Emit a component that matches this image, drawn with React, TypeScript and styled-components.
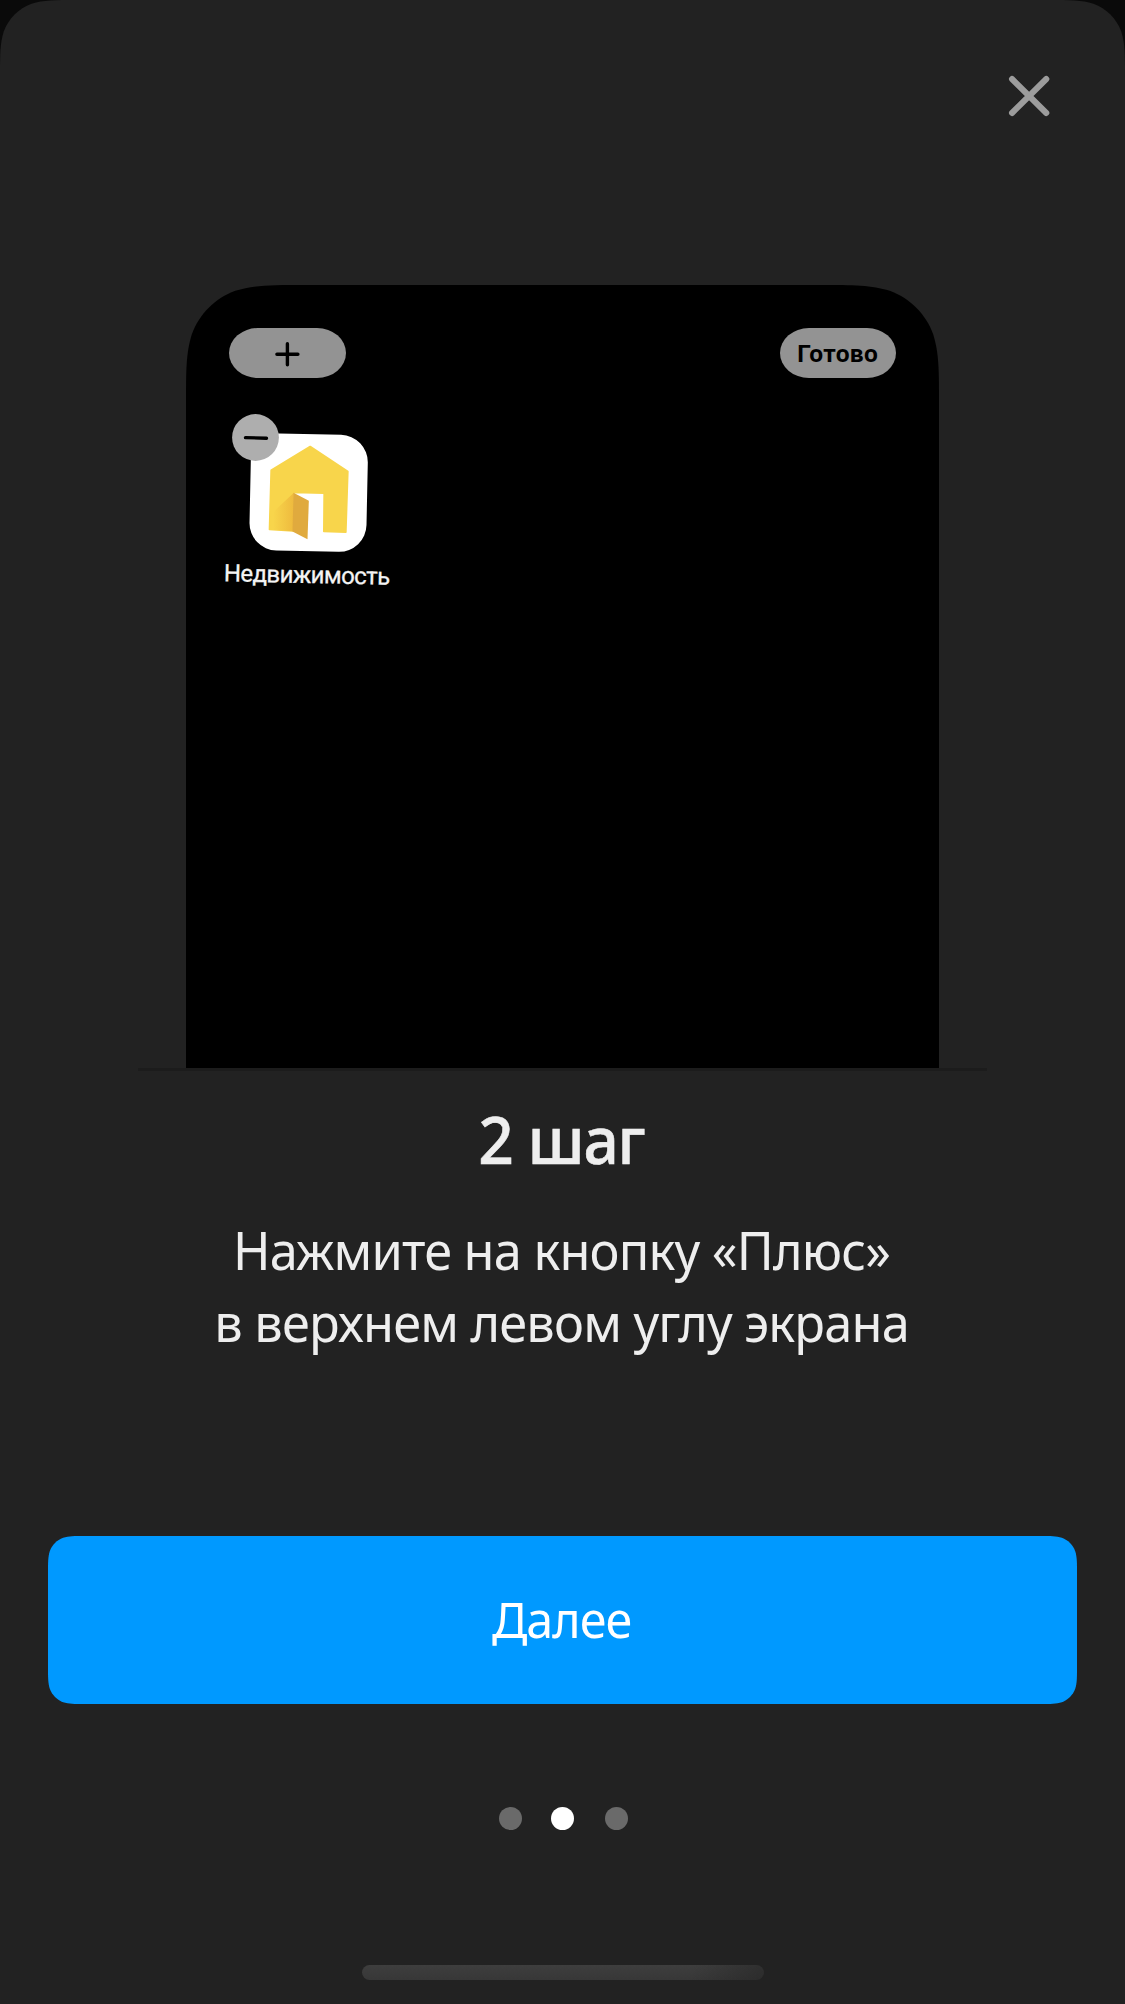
import React from "react";
import styled, { createGlobalStyle } from "styled-components";

const GlobalStyle = createGlobalStyle`
  * { box-sizing: border-box; }
  body { margin: 0; background: #0a0a0a; }
`;

type Radii = { top: number; bottom: number };

/* Outline of a panel with continuous ("squircle") corners. */
const smoothRect = (w: number, h: number, { top: t, bottom: b }: Radii) =>
  [
    `M0 ${1.5287 * t}`,
    `C0 ${1.0885 * t} 0 ${0.8684 * t} ${0.0749 * t} ${0.6315 * t}`,
    `C${0.1691 * t} ${0.3728 * t} ${0.3728 * t} ${0.1691 * t} ${0.6315 * t} ${0.0749 * t}`,
    `C${0.8684 * t} 0 ${1.0885 * t} 0 ${1.5287 * t} 0`,
    `L${w - 1.5287 * t} 0`,
    `C${w - 1.0885 * t} 0 ${w - 0.8684 * t} 0 ${w - 0.6315 * t} ${0.0749 * t}`,
    `C${w - 0.3728 * t} ${0.1691 * t} ${w - 0.1691 * t} ${0.3728 * t} ${w - 0.0749 * t} ${0.6315 * t}`,
    `C${w} ${0.8684 * t} ${w} ${1.0885 * t} ${w} ${1.5287 * t}`,
    `L${w} ${h - 1.5287 * b}`,
    `C${w} ${h - 1.0885 * b} ${w} ${h - 0.8684 * b} ${w - 0.0749 * b} ${h - 0.6315 * b}`,
    `C${w - 0.1691 * b} ${h - 0.3728 * b} ${w - 0.3728 * b} ${h - 0.1691 * b} ${w - 0.6315 * b} ${h - 0.0749 * b}`,
    `C${w - 0.8684 * b} ${h} ${w - 1.0885 * b} ${h} ${w - 1.5287 * b} ${h}`,
    `L${1.5287 * b} ${h}`,
    `C${1.0885 * b} ${h} ${0.8684 * b} ${h} ${0.6315 * b} ${h - 0.0749 * b}`,
    `C${0.3728 * b} ${h - 0.1691 * b} ${0.1691 * b} ${h - 0.3728 * b} ${0.0749 * b} ${h - 0.6315 * b}`,
    `C0 ${h - 0.8684 * b} 0 ${h - 1.0885 * b} 0 ${h - 1.5287 * b}Z`,
  ].join("");

const Sheet = styled.main`
  display: flex;
  flex-direction: column;
  align-items: center;
  width: 1125px;
  height: 2004px;
  overflow: hidden;
  background: #222;
  clip-path: path("${smoothRect(1125, 2004, { top: 50, bottom: 0 })}");
  font-family: "Noto Sans", "Open Sans", sans-serif;
  color: #eee;
`;

const Header = styled.header`
  display: flex;
  justify-content: flex-end;
  align-self: stretch;
  flex: none;
  height: 285px;
  padding: 72px 72px 0 0;
`;

const CloseButton = styled.button`
  width: 48px;
  height: 48px;
  padding: 0;
  border: 0;
  background: none;
  svg { display: block; }
`;

const Illustration = styled.section`
  display: flex;
  justify-content: center;
  flex: none;
  width: 849px;
  height: 786px;
  border-bottom: 3px solid #1c1c1c;
`;

const Phone = styled.div`
  width: 753px;
  height: 783px;
  padding: 43px 43px 0;
  background: #000;
  clip-path: path("${smoothRect(753, 783, { top: 78, bottom: 0 })}");
`;

const PhoneBar = styled.div`
  display: flex;
  justify-content: space-between;
`;

const Pill = styled.div`
  display: flex;
  align-items: center;
  justify-content: center;
  width: 116.5px;
  height: 50px;
  padding-top: 1px;
  border-radius: 29px / 25px;
  background: #939393;
  color: #000;
  font: 700 24.5px/50px Roboto, sans-serif;
  letter-spacing: 0.35px;
`;

const AppTile = styled.div`
  position: relative;
  display: flex;
  flex-direction: column;
  align-items: center;
  width: 160px;
  margin: 55px 0 0 -1px;
`;

const AppIcon = styled.svg`
  display: block;
  width: 119px;
  height: 119px;
`;

const RemoveBadge = styled.svg`
  position: absolute;
  left: 4px;
  top: -19px;
  width: 47px;
  height: 47px;
`;

const AppName = styled.span`
  margin-top: 5px;
  margin-right: 3px;
  font: 400 24px/36px Roboto, sans-serif;
  letter-spacing: -0.6px;
  -webkit-text-stroke: 0.3px #f4f4f4;
  white-space: nowrap;
  color: #f4f4f4;
  transform: rotate(1.2deg);
`;

const Title = styled.h1`
  margin: 23px 3px 0 0;
  font-size: 65.5px;
  font-weight: 500;
  line-height: 90px;
  letter-spacing: -1.2px;
  white-space: nowrap;
  -webkit-text-stroke: 0.6px #eee;
  transform: scaleX(0.95);
`;

const Description = styled.p`
  margin: 30px 2px 0 0;
  font-size: 52px;
  line-height: 72px;
  letter-spacing: -0.83px;
  text-align: center;
  white-space: nowrap;
  transform: scaleX(0.971);
`;

const Line = styled.span`
  display: block;
`;

const NextButton = styled.button`
  flex: none;
  width: 1029px;
  height: 168px;
  margin-top: 178px;
  padding: 0 2px 1px 0;
  border: 0;
  background: #0099ff;
  clip-path: path("${smoothRect(1029, 168, { top: 24, bottom: 24 })}");
  color: #fff;
  font: 400 48.5px/167px "Noto Sans", sans-serif;
  letter-spacing: -1px;
`;

const Dots = styled.div`
  display: flex;
  gap: 29px;
  margin-top: 103px;
  padding-left: 2px;
`;

const Dot = styled.span<{ $active?: boolean }>`
  width: 23px;
  height: 23px;
  border-radius: 50%;
  background: ${(p) => (p.$active ? "#fff" : "#6a6a6a")};
  &:last-child { margin-left: 2px; }
`;

const HomeIndicator = styled.div`
  flex: none;
  width: 402px;
  height: 15px;
  margin-top: 135px;
  border-radius: 8px;
  background: linear-gradient(100deg, transparent 82%, rgba(34, 34, 34, 0.55) 100%),
    linear-gradient(#3e3e3e, #373737);
`;

const HouseIcon = () => (
  <AppIcon viewBox="117.5 99.5 357 357">
    <defs>
      <linearGradient id="doorShade" x1="190" y1="0" x2="250" y2="0" gradientUnits="userSpaceOnUse">
        <stop offset="0" stopColor="#edb83c" stopOpacity="0" />
        <stop offset="1" stopColor="#edb63c" stopOpacity="0.85" />
      </linearGradient>
    </defs>
    <rect x="121" y="103" width="351" height="351" rx="82" fill="#fff" transform="rotate(1.2 296 278)" />
    <path
      d="M301 140 414 215 408 397 342 395 343 280 251 278 249 393 179 389 184 211Z"
      fill="#f8d54b"
      stroke="#f8d54b"
      strokeWidth="5"
      strokeLinejoin="round"
    />
    <path d="M252 279 250 394 179 390 181 345Z" fill="url(#doorShade)" />
    <path d="M251 279 297 303 293 418 248 395Z" fill="#e0aa3e" />
  </AppIcon>
);

export default function App() {
  return (
    <>
      <GlobalStyle />
      <Sheet>
        <Header>
          <CloseButton aria-label="Закрыть">
            <svg width="48" height="48" fill="none" stroke="#9c9c9c" strokeWidth="6" strokeLinecap="round">
              <path d="M7 7 41.3 41M41.3 7 7 41" />
            </svg>
          </CloseButton>
        </Header>
        <Illustration>
          <Phone>
            <PhoneBar>
              <Pill>
                <svg width="26" height="26" fill="none" stroke="#000" strokeWidth="3.4" strokeLinecap="round">
                  <path d="M13.4 2.7v21M2.9 13.2h21" />
                </svg>
              </Pill>
              <Pill>Готово</Pill>
            </PhoneBar>
            <AppTile>
              <HouseIcon />
              <RemoveBadge viewBox="0 0 47 47">
                <circle cx="23.5" cy="23.5" r="23.4" fill="#aeaeae" />
                <path d="M13.5 23.6 34.5 24.2" stroke="#000" strokeWidth="3.4" strokeLinecap="round" />
              </RemoveBadge>
              <AppName>Недвижимость</AppName>
            </AppTile>
          </Phone>
        </Illustration>
        <Title>2 шаг</Title>
        <Description>
          <Line>Нажмите на кнопку «Плюс»</Line>
          <Line>в верхнем левом углу экрана</Line>
        </Description>
        <NextButton>Далее</NextButton>
        <Dots>
          <Dot />
          <Dot $active />
          <Dot />
        </Dots>
        <HomeIndicator />
      </Sheet>
    </>
  );
}
